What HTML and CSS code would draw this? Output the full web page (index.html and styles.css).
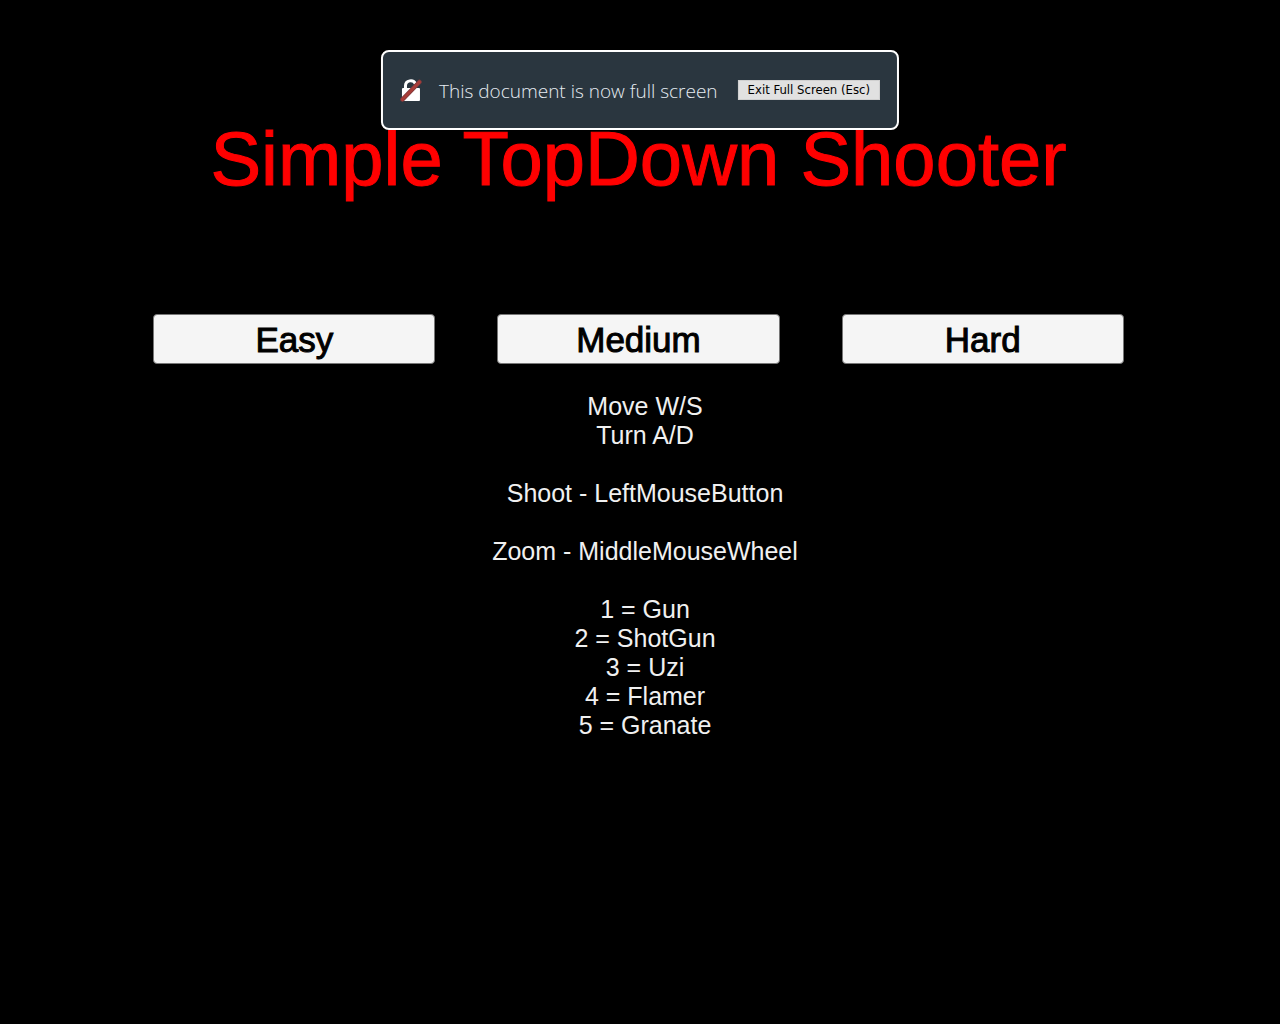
FILE: index.html
```html
<!DOCTYPE html>
<html lang="en">
<head>
    <meta charset="utf-8" />
    <title>Simple TopDown Shooter</title>
    <meta name="viewport" content="width=device-width, initial-scale=1">
    <link rel="stylesheet" href="styles.css">
</head>
<body>
    <div class="notice">
        <svg class="lock" width="22" height="24" viewBox="0 0 22 24">
            <path d="M5.500 12V8c0-6 8-7 10-2" fill="none" stroke="#fff" stroke-width="3"/>
            <rect x="2" y="10" width="18" height="13" rx="1" fill="#fff"/>
            <path d="M2.500 21.500L19.500 4" stroke="#7d3a3c" stroke-width="4.500" stroke-linecap="round"/>
            <path d="M2.500 21.500L19.500 4" stroke="#a83c38" stroke-width="3" stroke-linecap="round"/>
        </svg>
        <span class="notice-text">This document is now full screen</span>
        <button type="button" class="exit">Exit Full Screen (Esc)</button>
    </div>
    <main class="menu">
        <h1>Simple TopDown Shooter</h1>
        <div class="levels">
            <button type="button">Easy</button>
            <button type="button">Medium</button>
            <button type="button">Hard</button>
        </div>
        <div class="controls">
            <p>Move W/S<br>Turn A/D</p>
            <p>Shoot - LeftMouseButton</p>
            <p>Zoom - MiddleMouseWheel</p>
            <p>1 = Gun<br>2 = ShotGun<br>3 = Uzi<br>4 = Flamer<br>5 = Granate</p>
        </div>
    </main>
</body>
</html>
```
FILE: styles.css
```css
body,h1,p{
    margin: 0;
}
body{
    background: #000;
    font-family: "Liberation Sans", Arial, sans-serif;
}
/* browser notice on top of the game */
.notice{
    position: absolute;
    top: 50px;
    left: 50%;
    transform: translateX(-50%);
    box-sizing: border-box;
    display: flex;
    align-items: center;
    height: 80px;
    padding: 0 17px;
    border: 2px solid #fff;
    border-radius: 8px;
    background: #2a363f;
    white-space: nowrap;
}
.notice-text{
    margin: 0 20px 0 17px;
    padding-top: 2px;
    font-family: "Open Sans", sans-serif;
    font-size: 19px;
    font-weight: 300;
    color: #e6ecf2;
}
.exit{
    height: 20px;
    padding: 0 9px;
    border: 1px solid #d0d0d0;
    background: #e1e1e1;
    font-family: "DejaVu Sans Condensed", "DejaVu Sans", sans-serif;
    font-size: 13px;
    line-height: 18px;
    color: #000;
}
.menu{
    padding: 115px 3px 0 0;
    text-align: center;
}
h1{
    font-size: 76px;
    font-weight: 400;
    line-height: 88px;
    color: #f00;
    -webkit-text-stroke: 1px #f00;
}
.levels{
    display: grid;
    grid-template-columns: repeat(3, 1fr);
    gap: 62px;
    margin: 111px 12% 0;
}
.levels button{
    height: 50px;
    padding: 2px 0 0;
    border: 1px solid #777;
    border-radius: 4px;
    background: #f5f5f5;
    font-family: inherit;
    font-size: 35px;
    color: #000;
    -webkit-text-stroke: 1px #000;
}
.controls{
    padding: 28px 0 0 13px;
    font-size: 25px;
    line-height: 29px;
    color: #f0f0f0;
}
.controls p{
    margin-bottom: 29px;
}
```
